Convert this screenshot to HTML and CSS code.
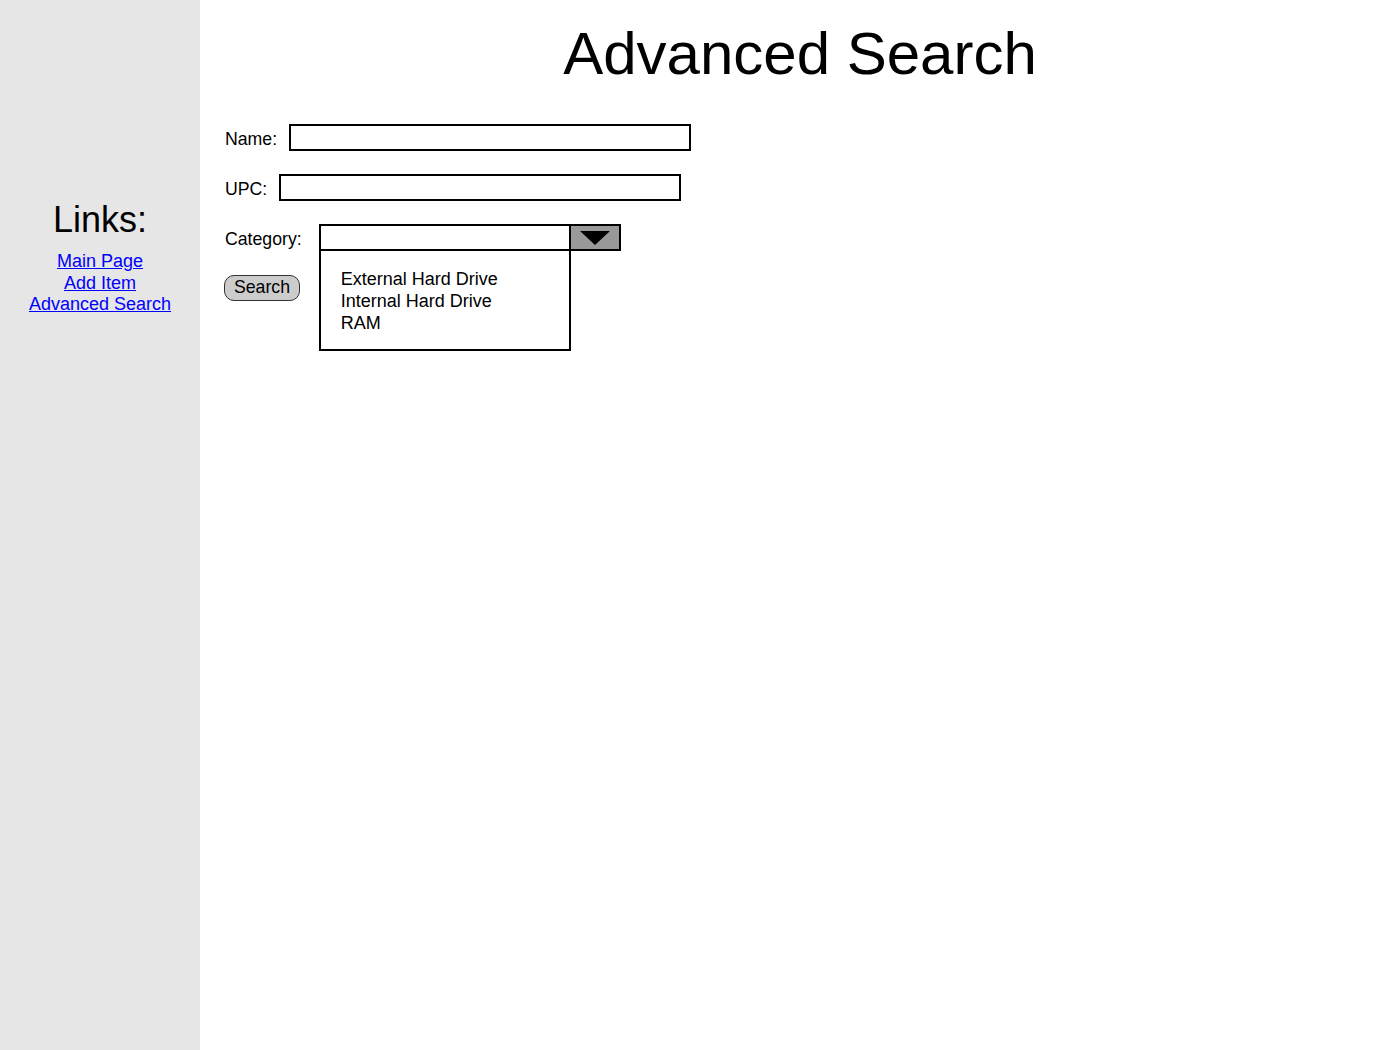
FILE: index.html
```html
<!DOCTYPE html>
<html lang="en">
<head>
<meta charset="utf-8">
<title>Advanced Search</title>
<link rel="stylesheet" href="styles.css">
</head>
<body>
<div class="page">
  <aside class="sidebar">
    <div class="links-title">Links:</div>
    <nav class="links">
      <a href="#">Main Page</a>
      <a href="#">Add Item</a>
      <a href="#">Advanced Search</a>
    </nav>
  </aside>
  <main class="main">
    <h1 class="title">Advanced Search</h1>
    <form class="form">
      <div class="row">
        <label class="label label-name">Name:</label>
        <div class="input"></div>
      </div>
      <div class="row">
        <label class="label label-upc">UPC:</label>
        <div class="input"></div>
      </div>
      <div class="row">
        <label class="label label-cat">Category:</label>
        <div class="select">
          <div class="select-value"></div>
          <div class="select-btn"><span class="tri"></span></div>
          <ul class="listbox">
            <li>External Hard Drive</li>
            <li>Internal Hard Drive</li>
            <li>RAM</li>
          </ul>
        </div>
      </div>
      <div class="row">
        <button type="button" class="btn">Search</button>
      </div>
    </form>
  </main>
</div>
</body>
</html>
```

FILE: styles.css
```css
html, body {
  margin: 0;
  padding: 0;
  background: #fff;
  font-family: "Liberation Sans", Arial, sans-serif;
  color: #000;
}

.page {
  display: flex;
  min-height: 1050px;
}

.sidebar {
  width: 200px;
  flex: 0 0 200px;
  background: #e6e6e6;
  text-align: center;
  padding-top: 199px;
  box-sizing: border-box;
}

.links-title {
  font-size: 36px;
  line-height: 41px;
}

.links {
  margin-top: 11px;
  display: flex;
  flex-direction: column;
  align-items: center;
  font-size: 18px;
  line-height: 21.5px;
}

.links a {
  color: #0000ff;
  text-decoration: underline;
}

.main {
  flex: 1;
  padding-left: 24px;
}

.title {
  margin: 0;
  padding-top: 19px;
  font-size: 60px;
  line-height: 70px;
  font-weight: normal;
  text-align: center;
  padding-right: 24px;
}

.form {
  margin-top: 35px;
  display: flex;
  flex-direction: column;
  gap: 23px;
}

.row {
  display: flex;
  align-items: center;
  height: 27px;
  font-size: 17.7px;
}

.label {
  padding-left: 1px;
  padding-top: 4px;
}

.label-name { margin-right: 12px; }
.label-upc { margin-right: 12px; }
.label-cat { margin-right: 17px; }

.input {
  width: 402px;
  height: 27px;
  box-sizing: border-box;
  border: 2px solid #000;
  background: #fff;
}

.select {
  position: relative;
  width: 302px;
  height: 27px;
  box-sizing: border-box;
  border: 2px solid #000;
  display: flex;
}

.select-value {
  flex: 1;
  border-right: 2px solid #000;
}

.select-btn {
  width: 48px;
  background: #999;
  display: flex;
  align-items: center;
  justify-content: center;
}

.tri {
  width: 0;
  height: 0;
  border-left: 15px solid transparent;
  border-right: 15px solid transparent;
  border-top: 14px solid #000;
  margin-top: 1px;
}

.listbox {
  position: absolute;
  left: -2px;
  top: 23px;
  width: 252px;
  box-sizing: border-box;
  margin: 0;
  list-style: none;
  border: 2px solid #000;
  background: #fff;
  padding: 17px 0 15px 20px;
  font-size: 18px;
  line-height: 22px;
}

.btn {
  margin-left: 0;
  width: 76px;
  height: 26px;
  box-sizing: border-box;
  border: 1px solid #333;
  border-radius: 10px;
  background: #ccc;
  font-family: "Liberation Sans", Arial, sans-serif;
  font-size: 17.7px;
  color: #000;
  padding: 0 0 3px 0;
  line-height: 22px;
}
```
